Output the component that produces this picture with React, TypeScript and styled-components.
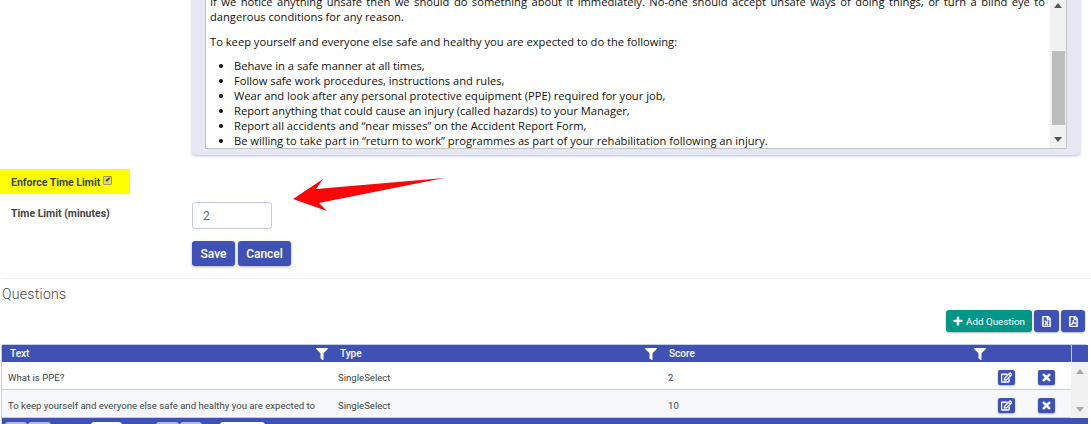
import React from 'react'
import styled, { createGlobalStyle } from 'styled-components'
import { FaPlus, FaTimes, FaRegEdit, FaRegFileExcel, FaRegFilePdf, FaFilter } from 'react-icons/fa'

const Global = createGlobalStyle`
  html, body {
    margin: 0;
    padding: 0;
    height: 424px;
    overflow: hidden;
    background: #fff;
  }
`

const Page = styled.div`
  width: 1091px;
  height: 424px;
  overflow: hidden;
  position: relative;
  font-family: Roboto, "Liberation Sans", sans-serif;
  color: #333;
`

const FormGrid = styled.div`
  display: grid;
  grid-template-columns: 192px 888px;
  margin-top: -6px;
`

const Panel = styled.div`
  grid-column: 2;
  height: 161px;
  box-sizing: border-box;
  background: #e5e8f4;
  padding: 0 13px 6px 13px;
  border-radius: 0 0 3px 3px;
  box-shadow: 0 1px 3px rgba(60, 70, 150, 0.35);
`

const Editor = styled.div`
  height: 155px;
  box-sizing: border-box;
  background: #fff;
  border: 1px solid #c4c4c4;
  border-top: 0;
  display: flex;
  overflow: hidden;
`

const EditorBody = styled.div`
  flex: 1;
  padding: 0 5px 0 4px;
  font-family: "Open Sans", sans-serif;
  font-size: 11.17px;
  line-height: 15px;
  color: #111;
  overflow: hidden;
`

const Para = styled.p`
  margin: 0 0 10px;
  text-align: justify;
  &:last-of-type {
    margin-bottom: 9px;
  }
`

const BulletList = styled.ul`
  margin: 0;
  padding-left: 24px;
`

const Scrollbar = styled.div`
  width: 16px;
  flex: none;
  background: #f1f1f1;
  display: flex;
  flex-direction: column;
  align-items: center;
  justify-content: space-between;
  padding: 9px 0 6px;
  box-sizing: border-box;
`

const Thumb = styled.div`
  width: 13px;
  height: 74px;
  margin-top: 31px;
  background: #bdbdbd;
`

const Arrow = styled.div<{ $up?: boolean; $color?: string }>`
  width: 0;
  height: 0;
  border-left: 4px solid transparent;
  border-right: 4px solid transparent;
  ${p =>
    p.$up
      ? `border-bottom: 5px solid ${p.$color || '#555'};`
      : `border-top: 5px solid ${p.$color || '#555'};`}
`

const EnforceLabel = styled.div`
  width: 119px;
  height: 24px;
  margin-top: 14px;
  background: #ffff00;
  padding: 1px 0 0 11px;
  display: flex;
  align-items: center;
  font-size: 10.5px;
  font-weight: 700;
  color: #444;
  gap: 3px;
`

const Tick = styled.span`
  width: 7px;
  height: 7px;
  background: #dcdc66;
  border: 1px solid #9a9a50;
  border-radius: 1px;
  color: #333;
  font-size: 7px;
  line-height: 7px;
  text-align: center;
  margin-top: -3px;
`

const TimeRow = styled.div`
  display: grid;
  grid-template-columns: 192px 80px;
  margin-top: 8px;
`

const TimeLabel = styled.label`
  padding: 5px 0 0 11px;
  font-size: 10.5px;
  font-weight: 700;
  color: #444;
`

const TimeInput = styled.div`
  height: 27px;
  box-sizing: border-box;
  border: 1px solid #c5cae9;
  border-radius: 3px;
  padding: 6px 10px;
  font-size: 12px;
  line-height: 14px;
  color: #666;
`

const Actions = styled.div`
  display: flex;
  gap: 3px;
  margin: 12px 0 0 192px;
`

const Button = styled.button<{ $w: number }>`
  width: ${p => p.$w}px;
  height: 25px;
  border: 0;
  border-radius: 3px;
  padding: 0;
  background: #3f51b5;
  color: #fff;
  font-family: Roboto, sans-serif;
  font-size: 12px;
  font-weight: 500;
  box-shadow: 0 1px 3px rgba(0, 0, 0, 0.3);
`

const Divider = styled.hr`
  height: 1px;
  margin: 12px 0 0 1px;
  border: 0;
  background: #ececf5;
`

const Heading = styled.h4`
  margin: 7px 0 0 2px;
  font-size: 14px;
  line-height: 17px;
  font-weight: 300;
  color: #444;
  letter-spacing: 0.3px;
`

const Toolbar = styled.div`
  display: flex;
  justify-content: flex-end;
  gap: 2px;
  margin: 7px 6px 0 0;
`

const ToolButton = styled.button<{ $w: number; $green?: boolean }>`
  width: ${p => p.$w}px;
  height: 22px;
  border: 0;
  border-radius: 3px;
  padding: 0;
  display: flex;
  align-items: center;
  justify-content: center;
  gap: 3px;
  background: ${p => (p.$green ? '#009688' : '#3f51b5')};
  color: #fff;
  font-family: Roboto, sans-serif;
  font-size: 9.8px;
  font-weight: 400;
  box-shadow: 0 1px 2px rgba(0, 0, 0, 0.3);
  svg {
    stroke: currentColor;
    stroke-width: 25;
  }
`

const Grid = styled.div`
  margin: 12px 3px 0 1px;
  border-left: 1px solid #c5cae9;
  border-top: 1px solid #c5cae9;
  border-radius: 3px 3px 0 0;
`

const HeaderRow = styled.div`
  display: grid;
  grid-template-columns: 329px 329px 329px 82px 1fr;
  height: 17px;
  background: #3f51b5;
  color: #fff;
  font-size: 10px;
  font-weight: 500;
`

const HeaderCell = styled.div<{ $divider?: boolean }>`
  display: flex;
  align-items: center;
  justify-content: space-between;
  padding: 0 3px 0 9px;
  &:first-child {
    padding-left: 8px;
  }
  ${p => p.$divider && 'border-left: 1px solid #c5cae9;'}
`

const Funnel = styled(FaFilter)`
  font-size: 12px;
  color: #fff;
`

const BodyWrap = styled.div`
  display: flex;
`

const Rows = styled.div`
  flex: 1;
`

const Row = styled.div<{ $alt?: boolean }>`
  display: grid;
  grid-template-columns: 330px 330px 336px 40px 1fr;
  align-items: center;
  height: 28px;
  box-sizing: border-box;
  padding-top: 4px;
  border-bottom: 1px solid #c5cae9;
  background: ${p => (p.$alt ? '#f6f8fc' : '#fff')};
  font-size: 9.6px;
  color: #444;
`

const Cell = styled.div`
  padding-left: 6px;
  white-space: nowrap;
`

const IconBox = styled.div`
  width: 17px;
  height: 15px;
  display: flex;
  align-items: center;
  justify-content: center;
  border-radius: 2px;
  background: #3f51b5;
  color: #fff;
  font-size: 11px;
  box-shadow: 0 1px 2px rgba(0, 0, 0, 0.3);
  svg {
    stroke: currentColor;
    stroke-width: 30;
  }
`

const GridScroll = styled.div`
  width: 17px;
  flex: none;
  background: #f1f1f1;
  display: flex;
  flex-direction: column;
  align-items: center;
  justify-content: space-between;
  padding: 7px 0 6px;
  height: 56px;
  box-sizing: border-box;
`

const Pager = styled.div`
  display: flex;
  align-items: flex-start;
  height: 8px;
  background: #3f51b5;
  overflow: hidden;
`

const PagerPiece = styled.div<{ $w: number; $ml: number; $white?: boolean }>`
  width: ${p => p.$w}px;
  height: 10px;
  margin: 4px 0 0 ${p => p.$ml}px;
  border-radius: 3px 3px 0 0;
  background: ${p => (p.$white ? '#fff' : '#b4bade')};
`

const rows = [
  { text: 'What is PPE?', type: 'SingleSelect', score: '2' },
  {
    text: 'To keep yourself and everyone else safe and healthy you are expected to',
    type: 'SingleSelect',
    score: '10',
  },
]

const bullets = [
  'Behave in a safe manner at all times,',
  'Follow safe work procedures, instructions and rules,',
  'Wear and look after any personal protective equipment (PPE) required for your job,',
  'Report anything that could cause an injury (called hazards) to your Manager,',
  'Report all accidents and “near misses” on the Accident Report Form,',
  'Be willing to take part in “return to work” programmes as part of your rehabilitation following an injury.',
]

const RedArrow = styled.svg`
  position: absolute;
  left: 280px;
  top: 170px;
`

const App: React.FC = () => (
  <Page>
    <Global />
    <FormGrid>
      <Panel>
        <Editor>
          <EditorBody>
            <Para>
              If we notice anything unsafe then we should do something about it immediately. No-one should
              accept unsafe ways of doing things, or turn a blind eye to dangerous conditions for any reason.
            </Para>
            <Para>
              To keep yourself and everyone else safe and healthy you are expected to do the following:
            </Para>
            <BulletList>
              {bullets.map(b => (
                <li key={b}>{b}</li>
              ))}
            </BulletList>
          </EditorBody>
          <Scrollbar>
            <Arrow $up />
            <Thumb />
            <Arrow />
          </Scrollbar>
        </Editor>
      </Panel>
    </FormGrid>
    <EnforceLabel>
      Enforce Time Limit <Tick>✔</Tick>
    </EnforceLabel>
    <TimeRow>
      <TimeLabel>Time Limit (minutes)</TimeLabel>
      <TimeInput>2</TimeInput>
    </TimeRow>
    <Actions>
      <Button $w={43}>Save</Button>
      <Button $w={53}>Cancel</Button>
    </Actions>
    <Divider />
    <Heading>Questions</Heading>
    <Toolbar>
      <ToolButton $w={86} $green>
        <FaPlus size={10} /> Add Question
      </ToolButton>
      <ToolButton $w={25}>
        <FaRegFileExcel size={11} />
      </ToolButton>
      <ToolButton $w={24}>
        <FaRegFilePdf size={11} />
      </ToolButton>
    </Toolbar>
    <Grid>
      <HeaderRow>
        <HeaderCell>
          Text <Funnel />
        </HeaderCell>
        <HeaderCell>
          Type <Funnel />
        </HeaderCell>
        <HeaderCell>
          Score <Funnel />
        </HeaderCell>
        <HeaderCell />
        <HeaderCell $divider />
      </HeaderRow>
      <BodyWrap>
        <Rows>
          {rows.map((r, i) => (
            <Row key={r.text} $alt={i === 1}>
              <Cell>{r.text}</Cell>
              <Cell>{r.type}</Cell>
              <Cell>{r.score}</Cell>
              <IconBox>
                <FaRegEdit />
              </IconBox>
              <IconBox>
                <FaTimes />
              </IconBox>
            </Row>
          ))}
        </Rows>
        <GridScroll>
          <Arrow $up $color="#a8a8a8" />
          <Arrow $color="#a8a8a8" />
        </GridScroll>
      </BodyWrap>
      <Pager>
        <PagerPiece $w={22} $ml={3} />
        <PagerPiece $w={23} $ml={1} />
        <PagerPiece $w={31} $ml={40} $white />
        <PagerPiece $w={23} $ml={34} />
        <PagerPiece $w={22} $ml={1} />
        <PagerPiece $w={45} $ml={18} $white />
      </Pager>
    </Grid>
    <RedArrow width="170" height="44" viewBox="0 0 170 44">
      <path d="M164 8 L36 19 L43 9 L13 29 L47 41 L39 33 Z" fill="#fb0707" />
    </RedArrow>
  </Page>
)

export default App
